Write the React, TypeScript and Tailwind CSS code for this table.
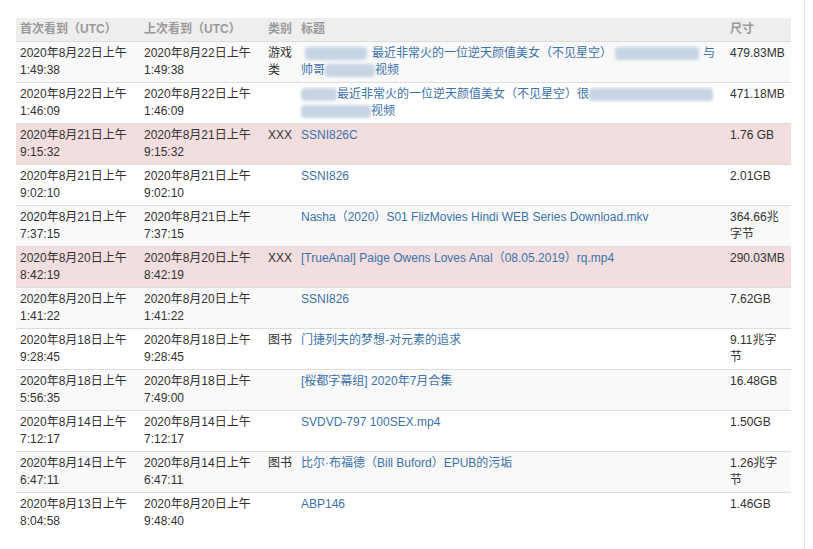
import React from "react";

type Row = {
  first: [string, string];
  last: [string, string];
  cat?: string;
  title: React.ReactNode;
  size: string;
  danger?: boolean;
};

const Blur = ({ w }: { w: string }) => (
  <span
    className={`inline-block h-[13px] align-middle bg-[#c6d4e4] blur-[1.5px] rounded-sm ${w}`}
  />
);

const rows: Row[] = [
  {
    first: ["2020年8月22日上午", "1:49:38"],
    last: ["2020年8月22日上午", "1:49:38"],
    cat: "游戏类",
    title: (
      <>
        <span className="whitespace-nowrap">
          <Blur w="w-[62px] ml-[4px] mr-[5px]" />
          最近非常火的一位逆天颜值美女（不见星空）
          <Blur w="w-[84px] ml-[3px] mr-[4px]" />与
        </span>
        <br />
        帅哥
        <Blur w="w-[50px]" />
        视频
      </>
    ),
    size: "479.83MB",
  },
  {
    first: ["2020年8月22日上午", "1:46:09"],
    last: ["2020年8月22日上午", "1:46:09"],
    title: (
      <>
        <span className="whitespace-nowrap">
          <Blur w="w-[36px]" />
          最近非常火的一位逆天颜值美女（不见星空）很
          <Blur w="w-[124px]" />
        </span>
        <br />
        <Blur w="w-[70px]" />
        视频
      </>
    ),
    size: "471.18MB",
  },
  {
    first: ["2020年8月21日上午", "9:15:32"],
    last: ["2020年8月21日上午", "9:15:32"],
    cat: "XXX",
    title: "SSNI826C",
    size: "1.76 GB",
    danger: true,
  },
  {
    first: ["2020年8月21日上午", "9:02:10"],
    last: ["2020年8月21日上午", "9:02:10"],
    title: "SSNI826",
    size: "2.01GB",
  },
  {
    first: ["2020年8月21日上午", "7:37:15"],
    last: ["2020年8月21日上午", "7:37:15"],
    title: "Nasha（2020）S01 FlizMovies Hindi WEB Series Download.mkv",
    size: "364.66兆字节",
  },
  {
    first: ["2020年8月20日上午", "8:42:19"],
    last: ["2020年8月20日上午", "8:42:19"],
    cat: "XXX",
    title: "[TrueAnal] Paige Owens Loves Anal（08.05.2019）rq.mp4",
    size: "290.03MB",
    danger: true,
  },
  {
    first: ["2020年8月20日上午", "1:41:22"],
    last: ["2020年8月20日上午", "1:41:22"],
    title: "SSNI826",
    size: "7.62GB",
  },
  {
    first: ["2020年8月18日上午", "9:28:45"],
    last: ["2020年8月18日上午", "9:28:45"],
    cat: "图书",
    title: "门捷列夫的梦想-对元素的追求",
    size: "9.11兆字节",
  },
  {
    first: ["2020年8月18日上午", "5:56:35"],
    last: ["2020年8月18日上午", "7:49:00"],
    title: "[桜都字幕组] 2020年7月合集",
    size: "16.48GB",
  },
  {
    first: ["2020年8月14日上午", "7:12:17"],
    last: ["2020年8月14日上午", "7:12:17"],
    title: "SVDVD-797 100SEX.mp4",
    size: "1.50GB",
  },
  {
    first: ["2020年8月14日上午", "6:47:11"],
    last: ["2020年8月14日上午", "6:47:11"],
    cat: "图书",
    title: "比尔·布福德（Bill Buford）EPUB的污垢",
    size: "1.26兆字节",
  },
  {
    first: ["2020年8月13日上午", "8:04:58"],
    last: ["2020年8月20日上午", "9:48:40"],
    title: "ABP146",
    size: "1.46GB",
  },
];

const App = () => {
  return (
    <div className="w-[805px] min-h-[549px] border-r border-[#e3e3e3] bg-white pt-[18px] pl-[16px] font-['Liberation_Sans','Noto_Sans_CJK_SC',sans-serif] text-[12px] leading-[17px] text-[#333]">
      <table className="w-[775px] table-fixed border-collapse">
        <colgroup>
          <col className="w-[124px]" />
          <col className="w-[124px]" />
          <col className="w-[33px]" />
          <col className="w-[429px]" />
          <col className="w-[65px]" />
        </colgroup>
        <thead>
          <tr className="bg-[#eeeeee] text-[#999] text-left">
            <th className="px-[4px] py-[3px] font-bold">首次看到（UTC）</th>
            <th className="px-[4px] py-[3px] font-bold">上次看到（UTC）</th>
            <th className="px-[4px] py-[3px] font-bold">类别</th>
            <th className="px-[4px] py-[3px] font-bold">标题</th>
            <th className="px-[4px] py-[3px] font-bold">尺寸</th>
          </tr>
        </thead>
        <tbody>
          {rows.map((r, i) => (
            <tr
              key={i}
              className={`border-t border-[#dddddd] align-top ${
                r.danger ? "bg-[#f2dede]" : i % 2 === 0 ? "bg-[#f9f9f9]" : "bg-white"
              }`}
            >
              <td className="px-[4px] py-[3px]">
                {r.first[0]}
                <br />
                {r.first[1]}
              </td>
              <td className="px-[4px] py-[3px]">
                {r.last[0]}
                <br />
                {r.last[1]}
              </td>
              <td className="px-[4px] py-[3px]">{r.cat}</td>
              <td className="px-[4px] py-[3px] text-[#3c72ab] h-[34px]">
                <a className="cursor-pointer">{r.title}</a>
              </td>
              <td className="px-[4px] py-[3px] break-all">{r.size}</td>
            </tr>
          ))}
        </tbody>
      </table>
    </div>
  );
};

export default App;
